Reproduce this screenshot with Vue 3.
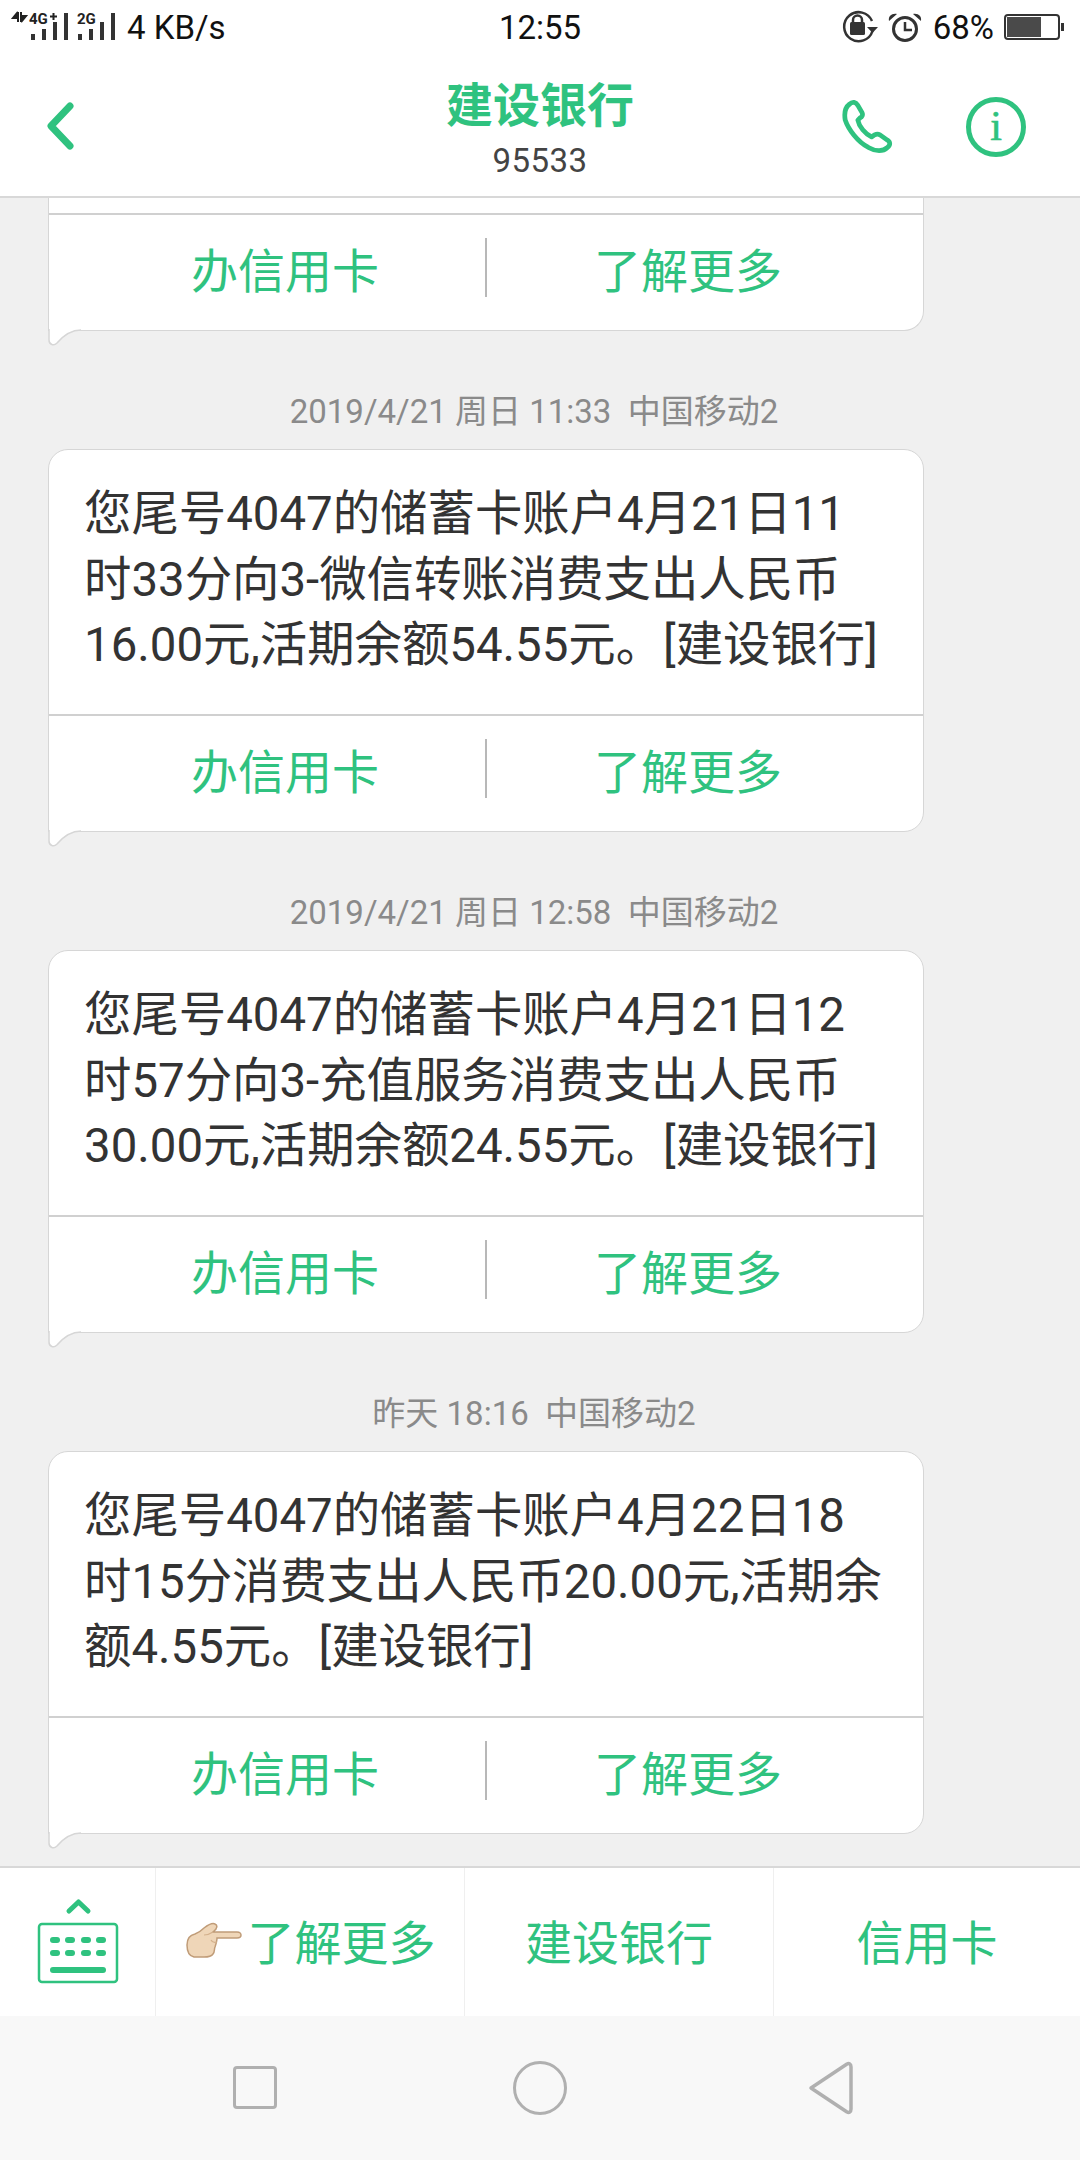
<template>
  <div class="phone">
    <div class="status-bar">
      <div class="status-left">
        <svg class="signal" width="118" height="60" viewBox="0 0 118 60">
          <path d="M18 12v10M18 12l-5 6h5M21 22V12M21 22l5-6h-5" stroke="#222" stroke-width="2" fill="#222" />
          <text x="29" y="23.5" class="net-label">4G</text>
          <path d="M53.500 13v7M50 16.500h7" stroke="#222" stroke-width="2" />
          <text x="77" y="23.500" class="net-label">2G</text>
          <g fill="#333">
            <rect v-for="bar in signalBars" :key="bar.x" :x="bar.x" :y="bar.y" width="4" :height="40 - bar.y" />
          </g>
        </svg>
        <span class="speed">4 KB/s</span>
      </div>
      <div class="clock">12:55</div>
      <div class="status-right">
        <svg width="90" height="60" viewBox="841 0 90 60">
          <path d="M872 21a14.500 14.500 0 1 0 .5 10" fill="none" stroke="#333" stroke-width="2.500" />
          <path d="M867 27h11l-5.500 6z" fill="#333" />
          <rect x="850" y="22" width="15" height="13" rx="1.500" fill="#333" />
          <path d="M853 23v-3a4.500 4.500 0 0 1 9 0v3" fill="none" stroke="#333" stroke-width="2.500" />
          <circle cx="905" cy="29" r="11.500" fill="none" stroke="#333" stroke-width="3" />
          <path d="M905 22v8h7" fill="none" stroke="#333" stroke-width="2.500" />
          <path d="M889 21c-1-5 3-8 8-7zM921 21c1-5-3-8-8-7z" fill="#333" />
        </svg>
        <span class="battery-text">68%</span>
        <svg width="62" height="60" viewBox="1004 0 62 60">
          <rect x="1005" y="15" width="54" height="24" rx="3" fill="#fff" stroke="#333" stroke-width="2" />
          <rect x="1007" y="17" width="34" height="20" fill="#4a4a4a" />
          <rect x="1061" y="23" width="3" height="8" fill="#333" />
        </svg>
      </div>
    </div>

    <div class="top-bar">
      <svg class="back" width="40" height="60" viewBox="0 0 40 60">
        <path d="M27 8 8 28l19 20" fill="none" stroke="#2fc27f" stroke-width="7" stroke-linecap="round" stroke-linejoin="round" />
      </svg>
      <div class="contact">
        <div class="contact-name">建设银行</div>
        <div class="contact-number">95533</div>
      </div>
      <svg class="phone-icon" width="57" height="59" viewBox="0 0 54 56">
        <path d="M7 5c3-3 6-2 8 1l4 7c1 2 0 4-2 5l-2 2c1 6 7 13 13 16l3-2c2-1 3-1 5 0l7 5c3 2 3 5 0 7-4 4-11 4-18 0C15 41 6 29 3 20 2 14 3 8 7 5z" fill="none" stroke="#2fc27f" stroke-width="4.500" stroke-linejoin="round" />
      </svg>
      <div class="info-icon">i</div>
    </div>

    <div class="thread">
      <div class="bubble bubble-cut">
        <div class="bubble-body"></div>
        <div class="bubble-actions">
          <span class="action action-left">办信用卡</span>
          <span class="action action-right">了解更多</span>
        </div>
        <svg class="tail" width="34" height="18" viewBox="0 0 34 18">
          <path d="M1 0v11c0 5 5 6 8 3C15 7 22 1 33 1V0z" fill="#fff" />
          <path d="M1 0v11c0 5 5 6 8 3C15 7 22 1 33 1" fill="none" stroke="#d6d6d6" stroke-width="1.500" />
        </svg>
      </div>

      <template v-for="msg in messages" :key="msg.stamp">
        <div class="stamp">{{ msg.stamp }}</div>
        <div class="bubble">
          <div class="bubble-body">
            <div v-for="line in msg.lines" :key="line">{{ line }}</div>
          </div>
          <div class="bubble-actions">
            <span class="action action-left">办信用卡</span>
            <span class="action action-right">了解更多</span>
          </div>
          <svg class="tail" width="34" height="18" viewBox="0 0 34 18">
            <path d="M1 0v11c0 5 5 6 8 3C15 7 22 1 33 1V0z" fill="#fff" />
            <path d="M1 0v11c0 5 5 6 8 3C15 7 22 1 33 1" fill="none" stroke="#d6d6d6" stroke-width="1.500" />
          </svg>
        </div>
      </template>
    </div>

    <div class="quick-bar">
      <div class="quick-cell">
        <svg class="keyboard" width="84" height="90" viewBox="0 0 84 90">
          <path d="M33 13 42.500 4 52 13" fill="none" stroke="#2fc27f" stroke-width="5" stroke-linecap="round" stroke-linejoin="round" />
          <rect x="3" y="26" width="78" height="58" rx="3" fill="none" stroke="#2fc27f" stroke-width="2.500" />
          <g fill="#2fc27f">
            <rect v-for="key in keyDots" :key="key.x + '-' + key.y" :x="key.x" :y="key.y" width="10" height="6" rx="3" />
            <rect x="14" y="69" width="56" height="6" rx="3" />
          </g>
        </svg>
      </div>
      <div class="quick-cell quick-text">
        <svg class="hand" width="58" height="38" viewBox="0 0 58 38">
          <path d="M2 23c0-6 3-10 8-11 3-1 6-3 9-6 4-3 9-5 11-4 3 1 2 5-1 7l-1 1h24c3 0 4 2 4 3 0 2-2 3-4 3H32c0 3-1 6-2 9-1 2 0 5-2 7-2 3-6 3-9 3H9c-5-1-7-6-7-12z" fill="#efd6b8" stroke="#c09c78" stroke-width="1.500" />
          <path d="M19 13c3 0 6-1 9-3M32 20c-3 1-5 0-6-2" fill="none" stroke="#d3b08c" stroke-width="1.200" />
        </svg>
        <span>了解更多</span>
      </div>
      <div class="quick-cell quick-text">建设银行</div>
      <div class="quick-cell quick-text">信用卡</div>
    </div>

    <div class="nav-bar">
      <div class="nav-square"></div>
      <div class="nav-circle"></div>
      <svg width="46" height="54" viewBox="0 0 46 54">
        <path d="M4 27 40 3c2-1 4 0 4 3v42c0 3-2 4-4 3z" fill="none" stroke="#b0b0b0" stroke-width="3.500" stroke-linejoin="round" />
      </svg>
    </div>
  </div>
</template>

<script setup>
const signalBars = [
  { x: 31, y: 34 },
  { x: 42, y: 29 },
  { x: 53, y: 22 },
  { x: 64, y: 13 },
  { x: 78, y: 34 },
  { x: 89, y: 29 },
  { x: 100, y: 22 },
  { x: 111, y: 13 },
]

const keyDots = []
for (const y of [39, 52]) {
  for (const x of [14, 29, 45, 60]) {
    keyDots.push({ x, y })
  }
}

const messages = [
  {
    stamp: '2019/4/21 周日 11:33  中国移动2',
    lines: [
      '您尾号4047的储蓄卡账户4月21日11',
      '时33分向3-微信转账消费支出人民币',
      '16.00元,活期余额54.55元。[建设银行]',
    ],
  },
  {
    stamp: '2019/4/21 周日 12:58  中国移动2',
    lines: [
      '您尾号4047的储蓄卡账户4月21日12',
      '时57分向3-充值服务消费支出人民币',
      '30.00元,活期余额24.55元。[建设银行]',
    ],
  },
  {
    stamp: '昨天 18:16  中国移动2',
    lines: [
      '您尾号4047的储蓄卡账户4月22日18',
      '时15分消费支出人民币20.00元,活期余',
      '额4.55元。[建设银行]',
    ],
  },
]
</script>

<style>
html,
body {
  margin: 0;
  background: #f0f0f0;
}
</style>

<style scoped>
.phone {
  width: 1080px;
  height: 2160px;
  display: flex;
  flex-direction: column;
  overflow: hidden;
  font-family: Roboto, 'Noto Sans CJK SC', sans-serif;
  background: #f0f0f0;
}

.status-bar {
  height: 60px;
  flex: none;
  display: grid;
  grid-template-columns: 1fr auto 1fr;
  align-items: center;
  background: #fff;
  color: #111;
  font-size: 33px;
}

.status-left,
.status-right {
  display: flex;
  align-items: center;
  height: 60px;
}

.status-right {
  justify-content: flex-end;
  padding-right: 14px;
}

.signal {
  flex: none;
}

.net-label {
  font-family: Roboto, sans-serif;
  font-size: 15px;
  font-weight: 700;
  fill: #222;
}

.speed,
.clock,
.battery-text {
  padding-bottom: 6px;
}

.speed {
  margin-left: 9px;
}

.battery-text {
  margin: 0 10px 0 2px;
}

.top-bar {
  height: 138px;
  flex: none;
  box-sizing: border-box;
  display: flex;
  align-items: center;
  background: #fff;
  border-bottom: 2px solid #d8d8d8;
  position: relative;
}

.back {
  margin-left: 43px;
  flex: none;
}

.contact {
  position: absolute;
  left: 0;
  right: 0;
  top: 12px;
  text-align: center;
}

.contact-name {
  font-size: 47px;
  font-weight: 700;
  line-height: 67px;
  color: #2fc27f;
}

.contact-number {
  font-size: 33px;
  line-height: 44px;
  color: #444;
  letter-spacing: 0.5px;
}

.phone-icon {
  margin-left: auto;
  margin-right: 67px;
  flex: none;
  position: relative;
}

.info-icon {
  width: 60px;
  height: 60px;
  box-sizing: border-box;
  border: 5px solid #2fc27f;
  border-radius: 50%;
  margin-right: 54px;
  margin-bottom: 2px;
  flex: none;
  position: relative;
  color: #2fc27f;
  font-family: 'Liberation Serif', serif;
  font-size: 42px;
  line-height: 48px;
  text-align: center;
  -webkit-text-stroke: 0.6px #2fc27f;
}

.thread {
  flex: 1;
  min-height: 0;
  overflow: hidden;
  padding: 0 156px 0 48px;
}

.bubble {
  position: relative;
  background: #fff;
  border: 1.5px solid #d6d6d6;
  border-radius: 20px 20px 20px 0;
  color: #333;
}

.bubble-cut {
  border-top: none;
  border-radius: 0 0 20px 0;
}

.bubble-cut .bubble-body {
  height: 17px;
  padding: 0;
}

.bubble-body {
  height: 266px;
  box-sizing: border-box;
  padding: 32px 0 0 35px;
  font-size: 47.400px;
  line-height: 65.500px;
  white-space: nowrap;
  border-bottom: 2px solid #d0d0d0;
}

.bubble-actions {
  height: 115px;
  box-sizing: border-box;
  padding-bottom: 10px;
  display: grid;
  grid-template-columns: 1fr 1fr;
  align-items: center;
  background: linear-gradient(#b8b8b8, #b8b8b8) center top 23px / 2px 59px no-repeat;
}

.action {
  font-size: 47px;
  color: #2fc27f;
  text-align: center;
}

.action-left {
  padding-left: 35px;
}

.action-right {
  padding-right: 33px;
}

.tail {
  position: absolute;
  left: -1.500px;
  top: 100%;
  margin-top: -1px;
}

.stamp {
  height: 118px;
  box-sizing: border-box;
  padding: 59px 12px 0 0;
  margin-left: -48px;
  margin-right: -156px;
  font-size: 33px;
  line-height: 44px;
  color: #8a8a8a;
  text-align: center;
  white-space: pre;
}

.quick-bar {
  height: 150px;
  flex: none;
  display: grid;
  grid-template-columns: 156px 309px 309px 1fr;
  background: #fff;
  border-top: 2px solid #d8d8d8;
  box-sizing: border-box;
}

.quick-cell {
  display: flex;
  align-items: center;
  justify-content: center;
  border-right: 1px solid #efefef;
}

.quick-cell:last-child {
  border-right: none;
}

.keyboard {
  margin-top: 2px;
}

.quick-text {
  gap: 5px;
  font-size: 47px;
  color: #2fc27f;
  padding-bottom: 5px;
}

.hand {
  margin-top: 2px;
}

.nav-bar {
  height: 144px;
  flex: none;
  display: flex;
  align-items: center;
  justify-content: space-between;
  padding: 0 227px 0 233px;
  background: #f8f8f8;
}

.nav-square {
  width: 44px;
  height: 43px;
  box-sizing: border-box;
  border: 3.500px solid #b0b0b0;
  border-radius: 4px;
  margin-bottom: 2px;
}

.nav-circle {
  width: 54px;
  height: 54px;
  box-sizing: border-box;
  border: 3.500px solid #b0b0b0;
  border-radius: 50%;
  margin-right: 4px;
}
</style>
